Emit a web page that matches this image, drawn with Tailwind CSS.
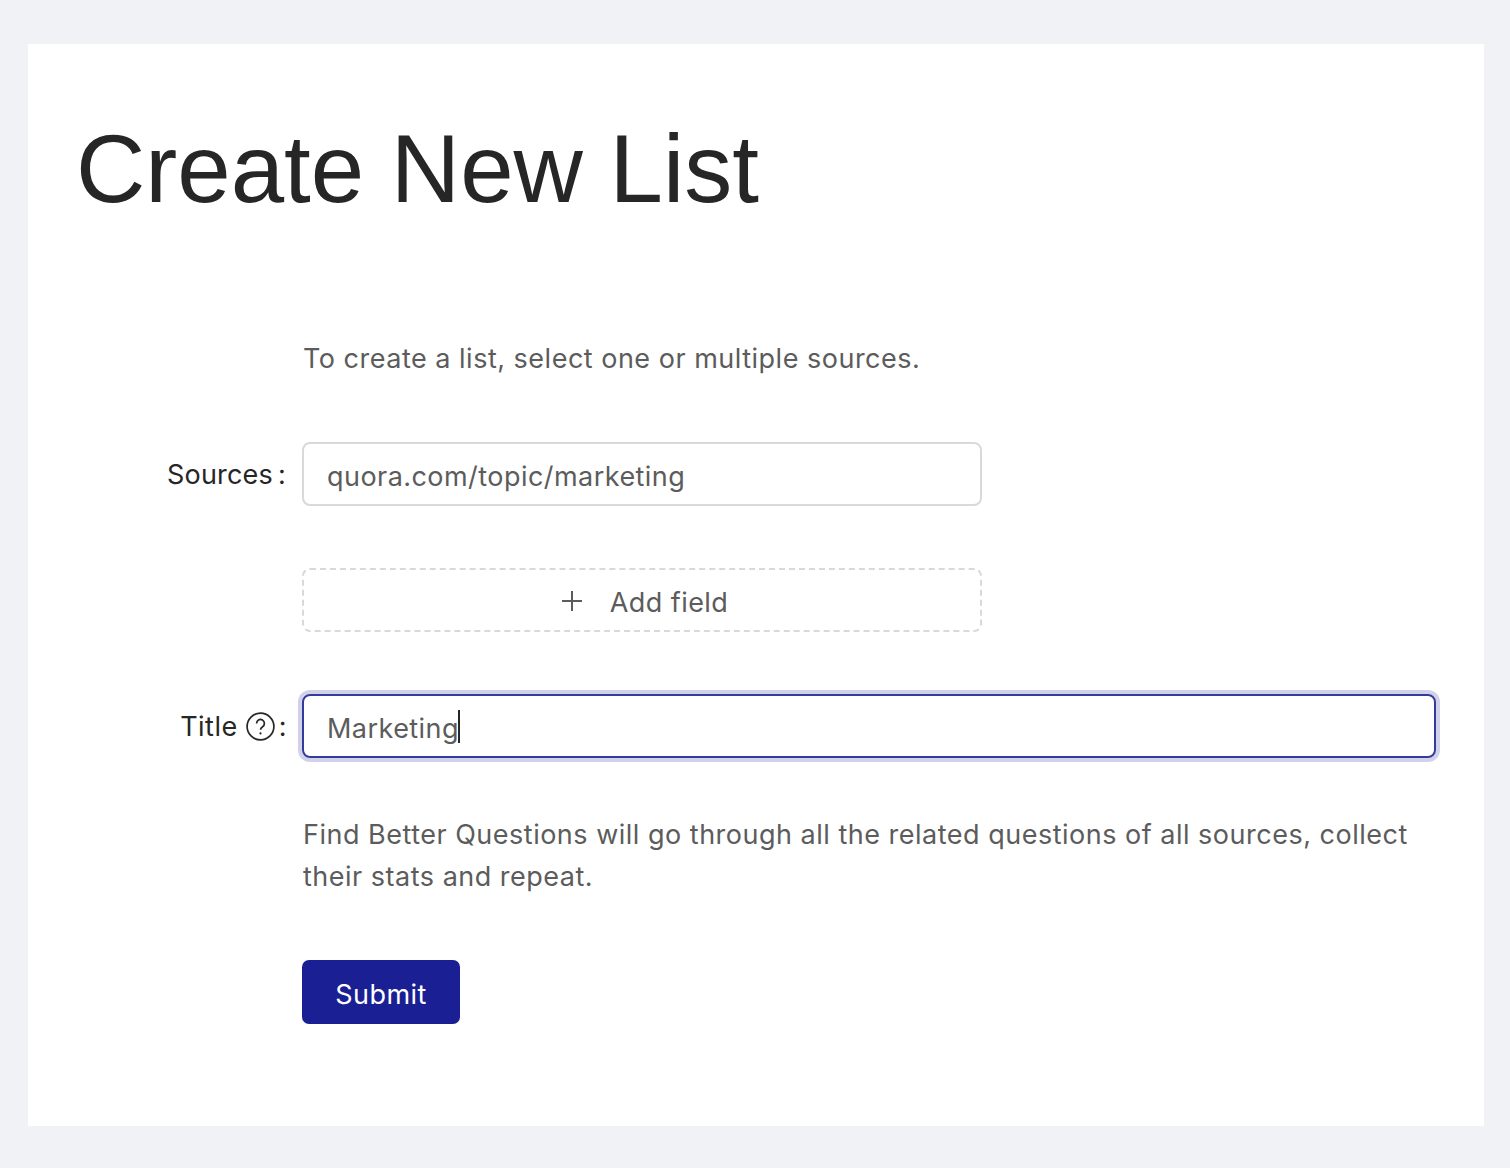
<!DOCTYPE html>
<html lang="en">
<head>
    <meta charset="UTF-8">
    <title>Create New List</title>
    <script src="https://cdn.jsdelivr.net/npm/@tailwindcss/browser@4"></script>
</head>
<body class="bg-[#f0f2f5] h-[1168px] overflow-hidden pt-[44px] pl-[28px] pr-[26px] font-['Inter',sans-serif]">
    <div class="bg-white h-[1082px] pl-[50px] pr-[48px]">
        <h1 class="pt-[75px] -ml-[2px] text-[96px] leading-[100px] text-[#262626] font-['Liberation_Sans',sans-serif]">Create New List</h1>

        <div class="mt-[119px] pl-[225px] text-[27px] leading-[42px] tracking-[0.5px] text-[#5c5c5c]">To create a list, select one or multiple sources.</div>

        <!-- sources -->
        <div class="mt-[62px] flex items-center">
            <div class="w-[208px] flex items-center justify-end pt-[2px] text-[27px] text-[#262626] leading-[42px] tracking-[0.2px]">
                Sources<span class="ml-[5px]">:</span>
            </div>
            <div class="ml-[16px] w-[680px] h-[64px] border-2 border-[#d9d9d9] rounded-[8px] px-[23px] pt-[6px] flex items-center text-[27px] tracking-[0.45px] text-[#5c5c5c]">quora.com/topic/marketing</div>
        </div>

        <button class="mt-[62px] ml-[224px] w-[680px] h-[64px] border-2 border-dashed border-[#d9d9d9] rounded-[8px] pt-[6px] pl-[4px] flex items-center justify-center gap-[26px] text-[27px] tracking-[0.45px] text-[#5c5c5c]">
            <svg class="mb-[4px]" width="24" height="24" viewBox="0 0 24 24" fill="none" stroke="#5c5c5c" stroke-width="2"><path d="M12 2v20M2 12h20"/></svg>
            Add field
        </button>

        <!-- title -->
        <div class="mt-[62px] flex items-center">
            <div class="w-[209px] flex items-center justify-end pt-[2px] text-[27px] text-[#262626] leading-[42px] tracking-[0.5px]">
                Title
                <svg class="ml-[8px] mb-[2px]" width="29" height="29" viewBox="0 0 29 29" fill="none" stroke="#262626" stroke-width="1.7"><circle cx="14.5" cy="14.5" r="13.4"/><path d="M10.6 11.4a3.9 3.9 0 1 1 6 3.3c-1.4.9-2.1 1.6-2.1 3.1"/><circle cx="14.5" cy="21.4" r="1.1" fill="#262626" stroke="none"/></svg>
                <span class="ml-[4px]">:</span>
            </div>
            <div class="ml-[15px] flex-1 h-[64px] border-2 border-[#343a9e] rounded-[8px] shadow-[0_0_0_4px_#d1d2ea] px-[23px] pt-[6px] flex items-center text-[27px] tracking-[0.45px] text-[#5c5c5c]">Marketing<span class="w-[1.5px] h-[33px] -mt-[6px] -ml-[1px] bg-[#262626]"></span></div>
        </div>

        <div class="mt-[56px] ml-[225px] text-[27px] leading-[42px] tracking-[0.5px] text-[#5c5c5c]">Find Better Questions will go through all the related questions of all sources, collect their stats and repeat.</div>

        <button class="mt-[62px] ml-[224px] w-[158px] h-[64px] bg-[#1a1f94] rounded-[7px] pt-[6px] text-white text-[27px] tracking-[0.45px]">Submit</button>
    </div>
</body>
</html>
